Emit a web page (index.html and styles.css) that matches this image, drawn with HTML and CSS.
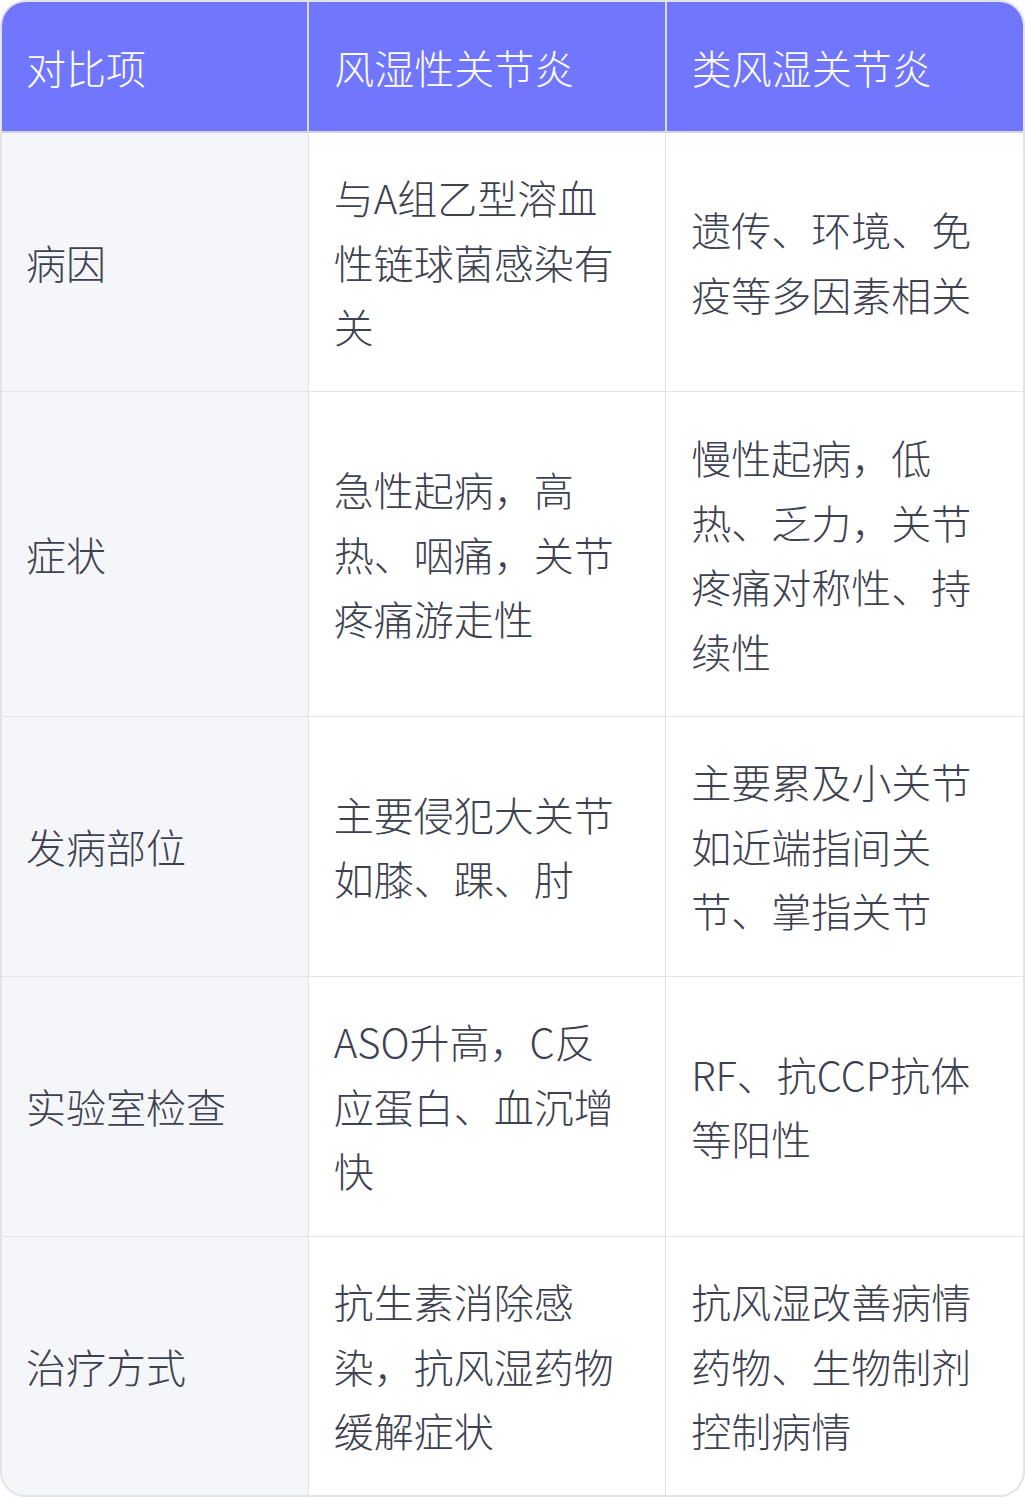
FILE: index.html
```html
<!DOCTYPE html>
<html lang="zh-CN">
<head>
<meta charset="utf-8">
<title>风湿性关节炎与类风湿关节炎对比</title>
<link rel="stylesheet" href="styles.css">
</head>
<body>
<div class="table-wrap">
  <table class="compare">
    <colgroup>
      <col class="col-item">
      <col class="col-a">
      <col class="col-b">
    </colgroup>
    <thead>
      <tr>
        <th>对比项</th>
        <th>风湿性关节炎</th>
        <th>类风湿关节炎</th>
      </tr>
    </thead>
    <tbody>
      <tr>
        <td class="label">病因</td>
        <td>与A组乙型溶血性链球菌感染有关</td>
        <td>遗传、环境、免疫等多因素相关</td>
      </tr>
      <tr>
        <td class="label">症状</td>
        <td>急性起病，高热、咽痛，关节疼痛游走性</td>
        <td>慢性起病，低热、乏力，关节疼痛对称性、持续性</td>
      </tr>
      <tr>
        <td class="label">发病部位</td>
        <td>主要侵犯大关节如膝、踝、肘</td>
        <td>主要累及小关节如近端指间关节、掌指关节</td>
      </tr>
      <tr>
        <td class="label">实验室检查</td>
        <td>ASO升高，C反应蛋白、血沉增快</td>
        <td>RF、抗CCP抗体等阳性</td>
      </tr>
      <tr>
        <td class="label">治疗方式</td>
        <td>抗生素消除感染，抗风湿药物缓解症状</td>
        <td>抗风湿改善病情药物、生物制剂控制病情</td>
      </tr>
    </tbody>
  </table>
</div>
</body>
</html>
```
FILE: styles.css
```css
html, body {
  margin: 0;
  padding: 0;
  background: #ffffff;
}

body {
  font-family: "Noto Sans CJK SC", "Noto Sans", sans-serif;
  font-weight: 300;
  color: #3d4150;
}

.table-wrap {
  width: 1025px;
  box-sizing: border-box;
  border: 2px solid #e2e3e8;
  border-radius: 26px;
  overflow: hidden;
}

.compare {
  width: 100%;
  border-collapse: collapse;
  table-layout: fixed;
}

.col-item { width: 30%; }
.col-a { width: 35%; }
.col-b { width: 35%; }

.compare th,
.compare td {
  font-size: 40px;
  line-height: 64.5px;
  padding: 32.7px 44px 32.7px 25px;
  text-align: left;
  vertical-align: middle;
  word-break: break-all;
}

.compare th:first-child,
.compare td.label {
  padding-left: 24px;
}

.compare th {
  background: #7176fe;
  color: #ffffff;
  font-weight: 300;
  padding-top: 33px;
  padding-bottom: 31px;
  border-left: 2px solid #d9dbe6;
  border-bottom: 2px solid #d3d5e2;
}

.compare th:first-child {
  border-left: none;
}

.compare td {
  border-left: 1px solid #e3e4e8;
  border-top: 1px solid #e3e4e8;
  background: #ffffff;
}

.compare tbody tr:first-child td {
  border-top: none;
}

.compare td.label {
  border-left: none;
  background: #f5f6fa;
}
```
